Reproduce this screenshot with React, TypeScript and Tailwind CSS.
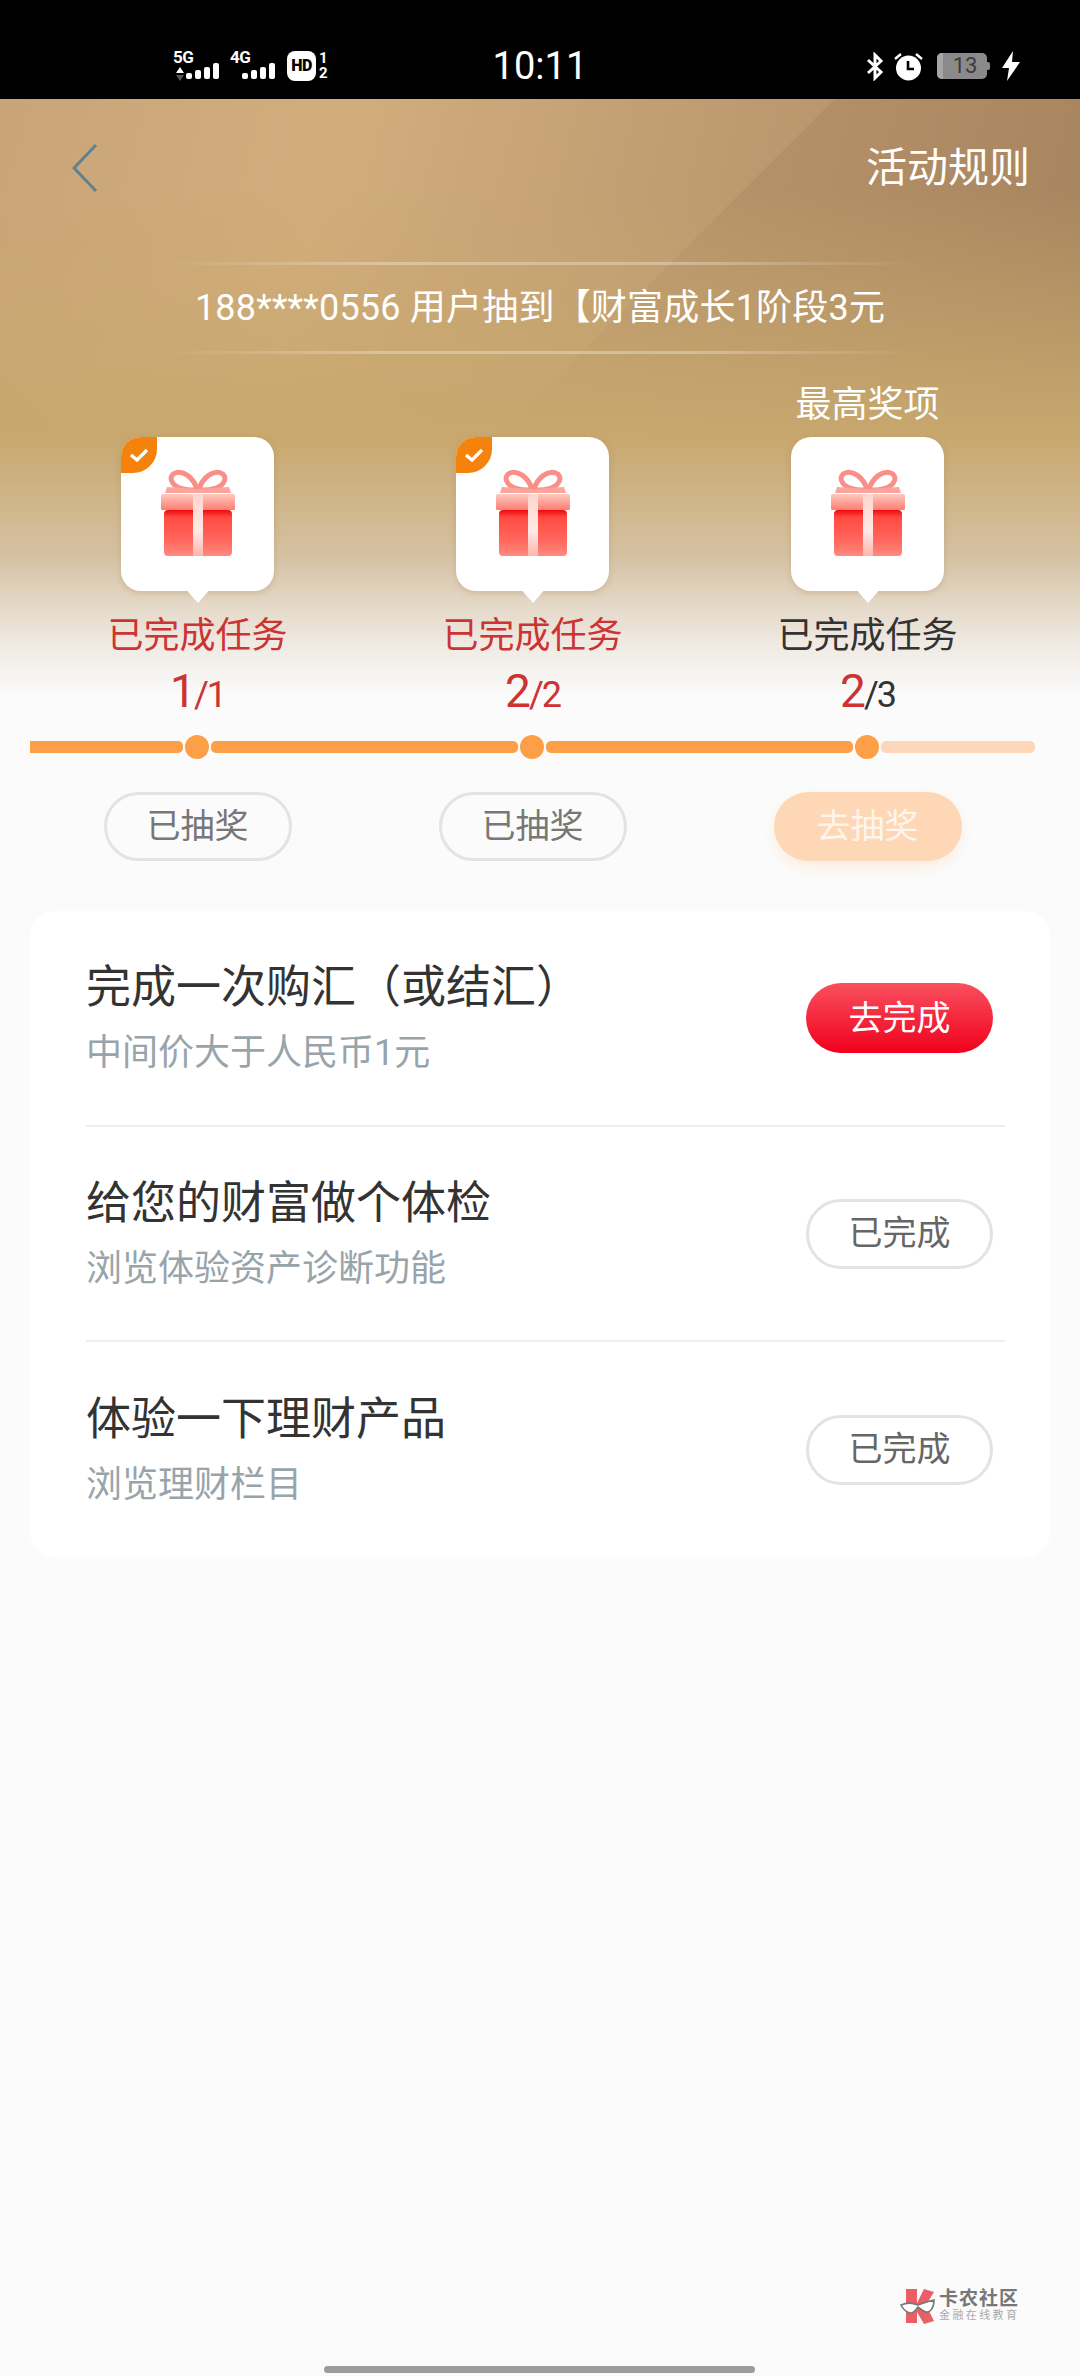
const tiers = [
  { done: true, best: false, labelRed: true, cur: '1', total: '1', totalRed: true, action: '已抽奖', active: false },
  { done: true, best: false, labelRed: true, cur: '2', total: '2', totalRed: true, action: '已抽奖', active: false },
  { done: false, best: true, labelRed: false, cur: '2', total: '3', totalRed: false, action: '去抽奖', active: true },
];

const tasks = [
  { title: '完成一次购汇（或结汇）', sub: '中间价大于人民币1元', todo: true, h: 'h-[214px]' },
  { title: '给您的财富做个体检', sub: '浏览体验资产诊断功能', todo: false, h: 'h-[213px]' },
  { title: '体验一下理财产品', sub: '浏览理财栏目', todo: false, h: 'h-[215px]' },
];

const GiftIcon = () => (
  <svg width="80" height="90" viewBox="0 0 80 90">
    <defs>
      <linearGradient id="lid" x1="0" y1="0" x2="0" y2="1">
        <stop offset="0" stopColor="#fdc9c0" />
        <stop offset="1" stopColor="#ff7d70" />
      </linearGradient>
      <linearGradient id="body" x1="0" y1="0" x2="0" y2="1">
        <stop offset="0" stopColor="#ee0a0a" />
        <stop offset="0.16" stopColor="#ff4a42" />
        <stop offset="0.7" stopColor="#ff6b60" />
        <stop offset="1" stopColor="#ff8a80" />
      </linearGradient>
      <linearGradient id="ribbon" x1="0" y1="0" x2="0" y2="1">
        <stop offset="0" stopColor="#ffd5cf" />
        <stop offset="0.6" stopColor="#ffe9e6" />
        <stop offset="1" stopColor="#ffb5ad" />
      </linearGradient>
    </defs>
    <path d="M39 20C35 8 25 1 17 4 10 7 13 16 22 19 28 21 34 21 39 21Z" fill="#fff" stroke="#f98f88" strokeWidth="5" />
    <path d="M41 20C45 8 55 1 63 4 70 7 67 16 58 19 52 21 46 21 41 21Z" fill="#fff" stroke="#f98f88" strokeWidth="5" />
    <path d="M9 18L40 20 71 18 73 24H7Z" fill="#fba49c" />
    <rect x="6" y="41" width="68" height="46" rx="4" fill="url(#body)" />
    <rect x="3" y="25" width="74" height="16" rx="1.5" fill="url(#lid)" />
    <rect x="35" y="25" width="10" height="62" fill="url(#ribbon)" />
  </svg>
);

const Logo = () => (
  <svg width="36" height="36" viewBox="0 0 36 36">
    <path d="M6 1H17V15L24 1 34 4 26 17 34 33 24 36 17 24V35H6Z" fill="#ea5f66" />
    <path d="M1 17C8 14 12 15 18 17 24 15 28 13 34 12 34 20 30 25 26 24 22 23 20 20 18 19 16 21 14 26 10 25 6 24 3 21 1 17Z" fill="#fff" stroke="#77787a" strokeWidth="1.6" />
  </svg>
);

function StatusBar() {
  const Bars = () => (
    <div className="flex items-end gap-[3px]">
      <span className="w-[6px] h-[6px] rounded-[2px] bg-white" />
      <span className="w-[6px] h-[9px] rounded-[2px] bg-white" />
      <span className="w-[6px] h-[12px] rounded-[2px] bg-white" />
      <span className="w-[6px] h-[16px] rounded-[2px] bg-white" />
    </div>
  );

  return (
    <div className="h-[99px] bg-black flex items-start pt-[50px] pl-[173px] pr-[60px] text-white">
      <div className="w-[24px] flex flex-col">
        <span className="h-[15px] text-[17px] leading-[15px] font-bold tracking-[-0.5px]">5G</span>
        <svg width="10" height="15" viewBox="0 0 10 15" className="ml-[2px] mt-[2px]">
          <path d="M5 0L9 6H1Z" fill="#fff" />
          <path d="M5 14L9 8H1Z" fill="#555" />
        </svg>
      </div>
      <div className="mt-[13px] -ml-[11px]">
        <Bars />
      </div>
      <div className="relative ml-[11px] w-[47px] h-[30px]">
        <span className="absolute left-0 top-0 text-[17px] leading-[15px] font-bold tracking-[-0.5px]">4G</span>
        <div className="absolute left-[12px] top-[13px]">
          <Bars />
        </div>
      </div>
      <div className="ml-[10px] w-[29px] h-[30px] mt-[1px] rounded-[8px] bg-white flex items-center justify-center text-black text-[16px] font-black leading-none tracking-[-0.5px]">
        HD
      </div>
      <div className="ml-[3px] mt-[1px] flex flex-col items-center text-[15px] leading-[15px] font-bold">
        <span>1</span>
        <span>2</span>
      </div>
      <div className="ml-[165px] -mt-[2px] w-[90px] text-[38px] leading-[36px]">10:11</div>
      <div className="ml-auto flex items-center gap-[9px] mt-[1px]">
        <svg width="18" height="29" viewBox="0 0 18 29" fill="none" stroke="#fff" strokeWidth="3">
          <path d="M2 8L15 20 9 26V3L15 9 2 21" />
        </svg>
        <svg width="31" height="29" viewBox="0 0 31 29">
          <circle cx="15.5" cy="16" r="12.5" fill="#fff" />
          <path d="M15 9V17H21" fill="none" stroke="#000" strokeWidth="2.6" />
          <path d="M2 7L8 2M29 7L23 2" stroke="#fff" strokeWidth="2.4" />
        </svg>
        <div className="flex items-center ml-[4px]">
          <div className="relative w-[50px] h-[26px] rounded-[5px] bg-[#8a8a8a] overflow-hidden flex items-center justify-center text-[#3c3c3c] text-[22px] leading-none pl-[6px]">
            <span className="absolute left-0 top-0 bottom-0 w-[6px] bg-[#a6a6a6]" />
            13
          </div>
          <span className="w-[3px] h-[8px] rounded-r-[2px] bg-[#8a8a8a]" />
        </div>
        <svg width="18" height="30" viewBox="0 0 18 30" className="ml-[3px]">
          <path d="M11 0L0 17H7L5 30 18 11H10Z" fill="#fff" />
        </svg>
      </div>
    </div>
  );
}

function Tier({ tier }: { tier: (typeof tiers)[number] }) {
  return (
    <div className="flex flex-col items-center">
      <div className="mt-[26px] h-[50px] text-[36px] leading-[50px] text-white">{tier.best ? '最高奖项' : ''}</div>
      <div className="relative mt-[7px] w-[153px] h-[154px] rounded-[20px] bg-white shadow-[0_2px_6px_rgba(150,110,60,0.25)] flex items-center justify-center">
        {tier.done && (
          <div className="absolute left-0 top-0 w-[36px] h-[36px] rounded-tl-[20px] rounded-br-[24px] bg-[#f5820d] flex items-center justify-center">
            <svg width="24" height="20" viewBox="0 0 24 20" fill="none" stroke="#fff" strokeWidth="3.4">
              <path d="M4 10L10 15 20 5" />
            </svg>
          </div>
        )}
        <GiftIcon />
        <span className="absolute left-[62px] top-[149px] w-[30px] h-[17px] bg-white [clip-path:polygon(0_0,100%_0,50%_100%)]" />
      </div>
      <div className={`mt-[20px] h-[50px] text-[36px] leading-[50px] ${tier.labelRed ? 'text-[#cc3333]' : 'text-[#333333]'}`}>
        已完成任务
      </div>
      <div className={`mt-[5px] h-[50px] leading-[50px] text-[36px] tracking-[-2px] ${tier.totalRed ? 'text-[#cc3333]' : 'text-[#333333]'}`}>
        <span className="text-[46px] text-[#cc3333]">{tier.cur}</span>/{tier.total}
      </div>
    </div>
  );
}

function Progress() {
  const Dot = () => <span className="w-[24px] h-[24px] rounded-full bg-[#fc9f47]" />;
  return (
    <div className="mt-[19px] ml-[30px] mr-[45px] flex items-center gap-[2px]">
      <span className="w-[153px] h-[12px] rounded-r-[5px] bg-[#fc9f47]" />
      <Dot />
      <span className="w-[307px] h-[12px] rounded-[5px] bg-[#fc9f47]" />
      <Dot />
      <span className="w-[307px] h-[12px] rounded-[5px] bg-[#fc9f47]" />
      <Dot />
      <span className="w-[154px] h-[12px] rounded-[5px] bg-[#fed7bb]" />
    </div>
  );
}

export default function App() {
  return (
    <div className="relative w-[1080px] h-[2376px] overflow-hidden bg-[#fbfbfb] font-['Roboto','Noto_Sans_CJK_SC',sans-serif]">
      <StatusBar />

      <div className="h-[617px] bg-[linear-gradient(180deg,rgba(200,168,110,0)_15%,rgba(200,168,110,1)_55%,#d5c1a2_74%,#efe9e2_88%,#fbfbfb_97%),linear-gradient(135deg,rgba(110,75,45,0)_590px,rgba(110,75,45,0.1)_590px,rgba(110,75,45,0.1)_100%),linear-gradient(45deg,rgba(110,75,45,0.08)_240px,rgba(110,75,45,0)_240px),linear-gradient(105deg,#c9a477_0%,#d2ad7c_28%,#bd9a70_60%,#aa8761_100%)]">
        <div className="h-[138px] pl-[72px] pr-[50px] flex items-center justify-between">
          <svg width="26" height="50" viewBox="0 0 26 50" fill="none" stroke="#5f8190" strokeWidth="3">
            <path d="M24 2L2 25 24 48" />
          </svg>
          <span className="text-[41px] leading-none text-white">活动规则</span>
        </div>

        <div className="mt-[25px] h-[92px] flex flex-col justify-between">
          <div className="mx-[160px] h-[3px] bg-[linear-gradient(90deg,rgba(255,255,255,0),rgba(255,255,255,0.3)_30%,rgba(255,255,255,0.3)_70%,rgba(255,255,255,0))]" />
          <div className="text-center text-[36px] leading-[50px] tracking-[0.2px] text-white">188****0556 用户抽到【财富成长1阶段3元</div>
          <div className="mx-[160px] h-[3px] bg-[linear-gradient(90deg,rgba(255,255,255,0),rgba(255,255,255,0.3)_30%,rgba(255,255,255,0.3)_70%,rgba(255,255,255,0))]" />
        </div>

        <div className="ml-[30px] mr-[45px] grid grid-cols-3">
          {tiers.map((tier, i) => (
            <Tier key={i} tier={tier} />
          ))}
        </div>
      </div>

      <Progress />

      <div className="mt-[33px] ml-[30px] mr-[45px] grid grid-cols-3">
        {tiers.map((tier, i) =>
          tier.active ? (
            <div key={i} className="justify-self-center w-[188px] h-[69px] rounded-full bg-[#fed7b6] shadow-[0_6px_12px_rgba(254,215,182,0.4)] flex items-center justify-center text-[34px] text-[#fff5ea]">
              {tier.action}
            </div>
          ) : (
            <div key={i} className="justify-self-center w-[188px] h-[69px] rounded-full border-[3px] border-[#e3e3e3] flex items-center justify-center text-[34px] text-[#777777]">
              {tier.action}
            </div>
          ),
        )}
      </div>

      <div className="mt-[50px] mx-[30px] rounded-[24px] bg-white">
        {tasks.map((task, i) => (
          <div key={i}>
            {i > 0 && <div className="ml-[56px] mr-[45px] h-[2px] bg-[#eeeeee]" />}
            <div className={`${task.h} pl-[56px] pr-[57px] flex items-center justify-between`}>
              <div className="flex flex-col gap-[10px]">
                <div className="h-[60px] text-[45px] leading-[60px] text-[#333333]">{task.title}</div>
                <div className="h-[50px] text-[36px] leading-[50px] text-[#98a4aa]">{task.sub}</div>
              </div>
              {task.todo ? (
                <div className="w-[187px] h-[70px] rounded-full bg-[linear-gradient(180deg,#f9505f,#f0001c)] flex items-center justify-center text-[34px] text-white">
                  去完成
                </div>
              ) : (
                <div className="w-[187px] h-[70px] rounded-full border-[3px] border-[#e3e3e3] flex items-center justify-center text-[34px] text-[#666666]">
                  已完成
                </div>
              )}
            </div>
          </div>
        ))}
      </div>

      <div className="absolute left-[900px] top-[2288px] flex items-center gap-[3px]">
        <Logo />
        <div className="flex flex-col">
          <span className="text-[19px] leading-[20px] font-bold text-[#777777] tracking-[1px]">卡农社区</span>
          <span className="text-[11px] leading-[14px] text-[#aaaaaa] tracking-[2.4px]">金融在线教育</span>
        </div>
      </div>

      <div className="absolute left-[324px] top-[2366px] w-[431px] h-[7px] rounded-full bg-[#9c9c9c]" />
    </div>
  );
}
